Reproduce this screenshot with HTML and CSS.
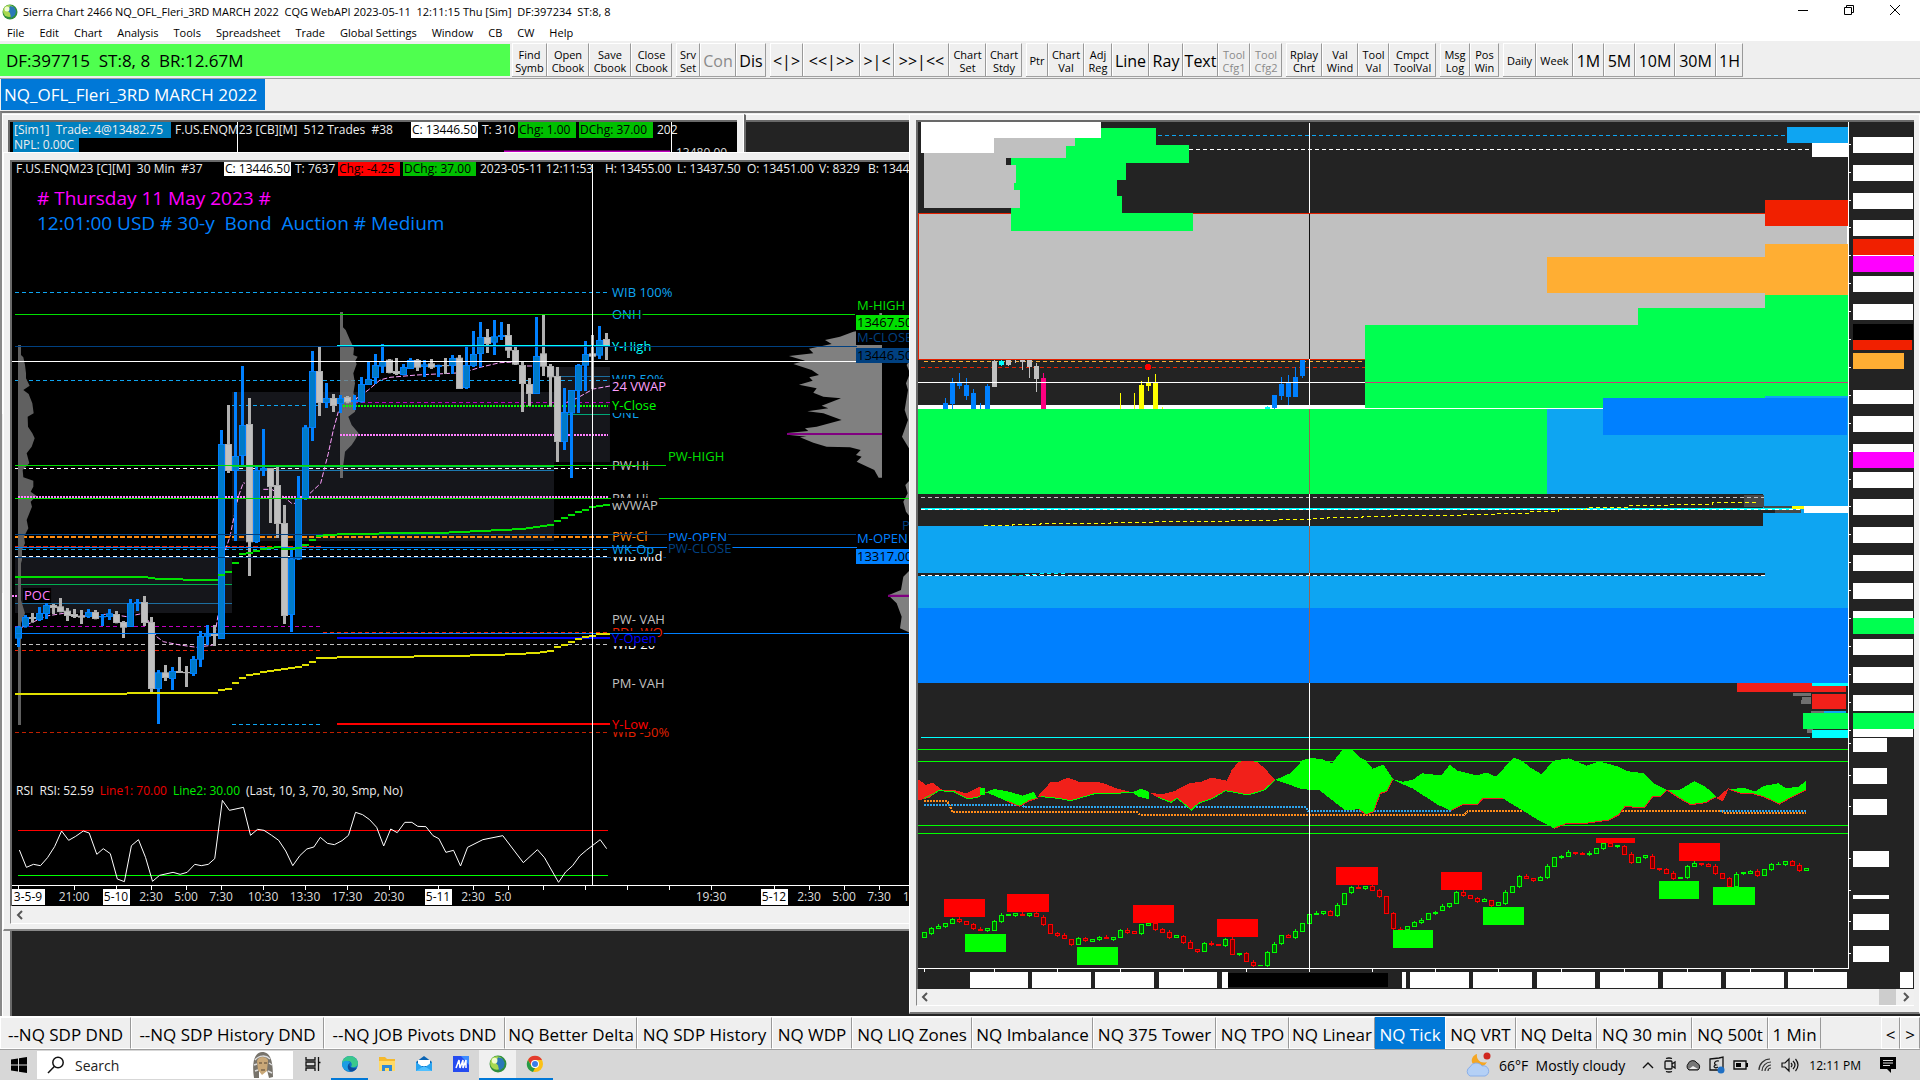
FILE: index.html
```html
<!DOCTYPE html>
<html lang="en">
<head>
<meta charset="utf-8">
<title>Sierra Chart 2466 NQ_OFL_Fleri_3RD MARCH 2022</title>
<link rel="stylesheet" href="styles.css">
</head>
<body>
<svg width="0" height="0" class="defs" aria-hidden="true">
  <defs>
    <symbol id="globe" viewBox="0 0 16 16"><circle cx="8" cy="8" r="7.5" fill="#2f8f3c"/><circle cx="7" cy="7" r="6" fill="#a8d850"/><path d="M8 2l4 1 2 4-1 4-4 3-1-5-2-2z" fill="#2a78b8"/><circle cx="5" cy="5" r="2.5" fill="#f0fbd0"/></symbol>
  </defs>
</svg>

<header class="titlebar">
  <svg class="app-icon" width="16" height="16"><use href="#globe"/></svg>
  <h1 class="title">Sierra Chart 2466 NQ_OFL_Fleri_3RD MARCH 2022&nbsp; CQG WebAPI 2023-05-11&nbsp; 12:11:15 Thu [Sim]&nbsp; DF:397234&nbsp; ST:8, 8</h1>
  <div class="caption">
    <button aria-label="Minimize"><svg width="12" height="12"><path d="M1 6.5h10" stroke="#000"/></svg></button>
    <button aria-label="Restore"><svg width="12" height="12"><path d="M1.500 3.500h7v7h-7zM3.500 3.500v-2h7v7h-2" fill="none" stroke="#000"/></svg></button>
    <button aria-label="Close"><svg width="12" height="12"><path d="M1 1l10 10M11 1L1 11" stroke="#000"/></svg></button>
  </div>
</header>
<nav class="menu">
  <button>File</button><button>Edit</button><button>Chart</button><button>Analysis</button><button>Tools</button><button>Spreadsheet</button><button>Trade</button><button>Global Settings</button><button>Window</button><button>CB</button><button>CW</button><button>Help</button>
</nav>

<div class="toolbar">
  <div class="status">DF:397715&nbsp; ST:8, 8&nbsp; BR:12.67M</div>
  <div class="group g-book"><button>Find<br>Symb</button><button>Open<br>Cbook</button><button>Save<br>Cbook</button><button>Close<br>Cbook</button></div>
  <div class="group g-conn"><button>Srv<br>Set</button><button class="big" disabled>Con</button><button class="big">Dis</button></div>
  <div class="group g-space"><button class="big">&lt;|&gt;</button><button class="big">&lt;&lt;|&gt;&gt;</button><button class="big">&gt;|&lt;</button><button class="big">&gt;&gt;|&lt;&lt;</button><button>Chart<br>Set</button><button>Chart<br>Stdy</button></div>
  <div class="group g-draw"><button>Ptr</button><button>Chart<br>Val</button><button>Adj<br>Reg</button><button class="big">Line</button><button class="big">Ray</button><button class="big">Text</button><button disabled>Tool<br>Cfg1</button><button disabled>Tool<br>Cfg2</button></div>
  <div class="group g-val"><button>Rplay<br>Chrt</button><button>Val<br>Wind</button><button>Tool<br>Val</button><button>Cmpct<br>ToolVal</button></div>
  <div class="group g-log"><button>Msg<br>Log</button><button>Pos<br>Win</button></div>
  <div class="group g-time"><button>Daily</button><button>Week</button><button class="big">1M</button><button class="big">5M</button><button class="big">10M</button><button class="big">30M</button><button class="big">1H</button></div>
</div>
<div class="booktabs"><button>NQ_OFL_Fleri_3RD MARCH 2022</button></div>

<main class="desktop">
  <section class="window w-back"><div class="pane back-pane"></div></section>

  <section class="window w-ticks">
    <div class="pane black">
      <svg class="ticks-chart" width="1100" height="170" viewBox="10 122 1100 170">
        <path d="M237.500 122v40M671.500 122v40" stroke="#fff"/>
        <path d="M504 151.500h166" stroke="#c000c0" stroke-width="2"/>
        <text x="676" y="157" class="ct" fill="#ddd">13480.00</text>
      </svg>
      <div class="legend ticks-legend">
        <span class="sim">[Sim1]&nbsp; Trade: 4@13482.75</span><span>F.US.ENQM23 [CB][M]&nbsp; 512 Trades&nbsp; #38</span><span class="last">C: 13446.50</span><span>T: 310</span><span class="up">Chg: 1.00</span><span class="up">DChg: 37.00</span><span class="cut">202</span>
        <span class="sim npl">NPL: 0.00C</span>
      </div>
    </div>
  </section>

  <section class="window w-empty"><div class="pane back-pane"></div></section>

  <section class="window w-main">
    <div class="pane black">
      <svg id="main-chart" width="1100" height="743" viewBox="12 162 1100 743">
        <g transform="translate(0 240) scale(.33333)" id="m"></g>
        <g fill="none" stroke="#fff">
          <path d="M18 830.500h590" stroke="#f00" stroke-width="1"/><path d="M18 875.500h590" stroke="#0f0"/>
          <path transform="translate(0 720) scale(.5867 .33333)" vector-effect="non-scaling-stroke" d="M33 390 45 442 57 433 69 437 81 413 93 380 105 333 117 361 129 349 142 333 152 339 165 403 176 386 188 401 200 477 212 485 224 377 236 359 248 412 260 484 272 466 295 457 307 463 319 457 332 433 343 437 355 433 366 416 379 241 391 271 415 262 427 346 439 328 450 331 463 346 475 361 487 393 499 437 511 407 523 387 535 381 546 352 558 370 570 374 583 362 594 346 606 277 618 284 630 299 642 322 654 378 666 327 677 338 690 307 702 307 712 319 726 320 738 347 748 356 760 397 773 391 785 438 797 382 823 359 857 347 892 428 916 389 928 413 952 487 964 456 976 437 988 408 1000 390 1023 359 1034 386"/>
          <path d="M12 885.500h1100M18.500 885v5M74.500 885v5M116.500 885v5M151.500 885v5M186.500 885v5M221.500 885v5M263.500 885v5M305.500 885v5M347.500 885v5M389.500 885v5M438.500 885v5M473.500 885v5M508.500 885v5M543.500 885v5M585.500 885v5M627.500 885v5M669.500 885v5M711.500 885v5M774.500 885v5M809.500 885v5M844.500 885v5M879.500 885v5"/>
          <path d="M592.500 164v721" />
        </g>
        <g id="main-axis" class="ct" text-anchor="middle"></g>
      </svg>
      <div class="legend main-legend">
        <span>F.US.ENQM23 [C][M]&nbsp; 30 Min&nbsp; #37</span><span class="last">C: 13446.50</span><span>T: 7637</span><span class="down">Chg: -4.25</span><span class="up">DChg: 37.00</span><span>2023-05-11 12:11:53</span><span>H: 13455.00</span><span>L: 13437.50</span><span>O: 13451.00</span><span>V: 8329</span><span>B: 13445.75</span>
      </div>
      <div class="news"><p class="day"># Thursday 11 May 2023 #</p><p>12:01:00 USD # 30-y&nbsp; Bond&nbsp; Auction # Medium</p></div>
      <p class="rsi"><span>RSI&nbsp; RSI: 52.59</span><span class="r">Line1: 70.00</span><span class="g">Line2: 30.00</span><span>(Last, 10, 3, 70, 30, Smp, No)</span></p>
    </div>
    <div class="scroll"><button aria-label="Scroll left"><svg width="8" height="10"><path d="M6 1L2 5l4 4" fill="none" stroke="#555" stroke-width="2"/></svg></button></div>
  </section>

  <section class="window w-tick">
    <div class="pane dark">
      <svg id="tick-chart" viewBox="918 122 996 867" preserveAspectRatio="none" shape-rendering="crispEdges">
        <!-- overhead zone -->
        <g fill="none" stroke-dasharray="4 3"><path d="M1158 135.500h628" stroke="#0ea5f2"/><path d="M1189 149.500h622" stroke="#fff"/></g>
        <path d="M918.500 213.500H1848V359.500H918.500z" fill="#c0c0c0" stroke="#e32000"/>
        <path fill="#00ff50" d="M1101 128h55v17h33v18h-63v17h-9v16h5v17h71v18h-182v-73h55v-12h9v-8h26z"/>
        <path fill="#c0c0c0" d="M994 138h81v8h-9v12h-60v7h10v18h-2v7h6v18h-96v-55h70z"/>
        <path fill="#fff" d="M921 122h180v16H994v15h-73z"/>
        <path fill="#0ea5f2" d="M1787 127h61v16h-61z"/><path fill="#fff" d="M1812 143h36v14h-36zM1847 226h1v18h-1z"/>
        <path fill="#f12000" d="M1765 200h83v26h-83z"/>
        <path fill="#ffae33" d="M1547 257h218v-13h83v51h-83v-2h-218z"/>
        <!-- price band -->
        <g fill="none" stroke-dasharray="4 3"><path d="M924 361.500h440" stroke="#ffae33"/><path d="M921 367.500h444" stroke="#e32000"/></g>
        <path fill="#fff" d="M918 405h447v4H918z"/>
        <g id="band"></g>
        <circle cx="1148" cy="367" r="3" fill="#f00"/>
        <path d="M918 382.500h447" stroke="#fff"/>
        <path fill="#00ff50" d="M1365 325h273v-17h127v-13h83v114h-483zM918 409h629v85H918z"/>
        <path d="M1365 408.500h240" stroke="#fff"/><path d="M1365 382.500h483" stroke="#c83c78"/>
        <path fill="#0ea5f2" d="M1547 409h218v-13h83v130H918h845v-32h-216z"/>
        <path fill="#0080ff" d="M1603 398h244v37h-244z"/>
        <path fill="#0ea5f2" d="M918 526h930v82H918z"/><path fill="#0080ff" d="M918 608h930v75H918z"/>
        <path fill="#484848" d="M1744 495h20v12h-20zM1764 506h28v3h-28zM1775 510h26v3h-26z"/>
        <path fill="#232323" d="M1763 509h12v4h-12z"/>
        <path d="M921 497.500h843" stroke="#c0c0c0" stroke-dasharray="4 3"/>
        <path d="M921 509h871" stroke="#0ff" stroke-width="2"/><path d="M921 509.500h880" stroke="#fff" stroke-dasharray="4 3"/>
        <path d="M984 525.500h28v-1h28v-1h70v-1h42v-1h77v-1h49v-1h35v-1h14v-1h35v-1h28v-1h70v-1h35v-1h35v-2h28v-2h28v-2h42v-2h42v-1h42v-2h46" fill="none" stroke="#ff0" stroke-dasharray="4 3"/>
        <path fill="#ff0" d="M1792 506h12v3h-12z"/><path fill="#fff" d="M1804 506h44v7h-44z"/>
        <path fill="#232323" d="M918 573h847v3H918z"/><path d="M921 575.500h844" stroke="#fff" stroke-dasharray="4 3"/>
        <path d="M1012 575.500h13M1025 574.500h15M1040 573.500h28" stroke="#0ff" stroke-dasharray="4 3"/>
        <!-- lower tags -->
        <path fill="#f1201a" d="M1737 683h109v9h-109zM1812 694h34v15h-34z"/>
        <path fill="#707070" d="M1793 693h18v3h-18zM1802 697h9v3h-9zM1801 700h10v4h-10zM1811 711h13v3h-13zM1807 729h6v4h-6z"/>
        <path fill="#0ea5f2" d="M1824 711h22v2h-22z"/><path fill="#00ff50" d="M1803 713h45v16h-45z"/>
        <path fill="#0ff" d="M1812 683h36v3h-36zM1812 730h36v8h-36zM921 737h889v1H921z"/>
        <path d="M918 749.500h930M918 761.500h930M918 825.500h930M918 833.500h930" stroke="#0f0"/>
        <!-- oscillator and swing candles, drawn in sub-pixel units -->
        <g transform="translate(910 730) scale(.6441 .33333)" stroke-width="1">
          <g fill="none" stroke-width="2" stroke-dasharray="2 1">
            <path vector-effect="non-scaling-stroke" stroke="#ff8c1a" d="M22 213H58L66 246H352L358 255H860L866 243H952M1106 243H1260L1264 248H1391"/>
            <path vector-effect="non-scaling-stroke" stroke="#2ba4ee" d="M22 225H175L177 231H614L618 243H840M1258 243H1391"/>
          </g>
          <path fill="#f1201a" d="M12 147 25 165 35 158 50 180 68 180 88 190 108 170 118 187 108 200 90 207 68 185 45 182 30 203 12 212zM198 200 218 157 230 155 245 143 265 157 280 155 298 158 320 175 345 187 320 190 285 192 250 212 230 205zM370 187 390 193 410 184 435 158 450 157 468 143 492 152 500 118 510 96 522 92 540 96 553 120 567 150 550 180 525 195 490 182 470 205 448 220 437 240 415 205 405 217 385 202zM1252 205 1272 172 1262 215z"/>
          <path fill="#0f0" d="M118 187 130 177 150 183 175 197 192 186 198 205 185 212 170 229 150 213zM108 174h8v22h-8zM345 187 358 177 370 183 372 208 355 200zM567 150 590 130 610 90 625 84 640 88 655 100 672 58 686 58 697 80 708 92 718 116 735 104 750 148 740 185 730 190 720 245 708 254 697 238 675 240 655 210 635 180 610 178 590 165zM750 148 765 155 780 150 795 130 825 136 838 104 850 122 880 136 895 128 910 140 925 108 937 83 950 92 965 115 980 132 1000 92 1023 85 1050 107 1070 94 1100 110 1115 124 1140 130 1155 160 1175 180 1165 200 1153 200 1140 233 1110 230 1100 255 1085 270 1045 281 1020 280 1000 295 975 270 950 240 920 205 890 205 880 225 860 222 840 242 820 225 800 200 780 175 765 163zM1175 180 1195 180 1218 153 1235 170 1252 200 1235 218 1212 224 1195 205zM1272 178 1295 173 1312 185 1325 168 1348 160 1360 175 1380 170 1391 152 1391 180 1370 200 1350 222 1325 200 1310 192 1290 190z"/>
          <g fill="none"><path vector-effect="non-scaling-stroke" stroke="#0f0" d="M22 206 45 182 68 185 90 207 108 200M204 200 230 205 250 212 285 192 320 190 345 187M385 202 405 217 415 205 437 240 448 220 470 205 490 182 525 195 550 180 567 150"/>
          <path vector-effect="non-scaling-stroke" stroke="#f1201a" d="M150 213 170 229 185 212 198 205M697 238 708 254 720 245 730 190 740 185 750 148M840 242 860 222 880 225 890 205 920 205M1000 295 1020 280 1045 281 1085 270 1100 255 1110 230 1140 233 1153 200 1165 200 1175 180 1195 205 1212 224 1235 218 1252 200M1272 178 1290 190 1310 192 1325 200 1350 222 1370 200 1391 180"/></g>
          <g id="swing"></g>
          <path fill="#f00" d="M53 507h63v54h-63zM151 492h65v54h-65zM346 525h64v54h-64zM477 567h63v54h-63zM661 411h66v54h-66zM824 426h64v54h-64zM1065 324h61v15h-61zM1194 339h64v54h-64z"/>
          <path fill="#0f0" d="M85 612h64v54H85zM259 651h64v54h-64zM750 600h62v54h-62zM890 531h63v54h-63zM1163 453h62v54h-62zM1247 471h65v54h-65z"/>
        </g>
        <!-- crosshair, inverted over the filled zones -->
        <g fill="none"><path stroke="#fff" d="M1309.500 123v90M1309.500 359v50M1309.500 494v32M1309.500 573v3M1309.500 683v285"/><path stroke="#111" d="M1309.500 214v145"/><path stroke="#966450" d="M1309.500 409v85M1309.500 526v47M1309.500 576v107"/></g>
        <!-- scales -->
        <path d="M1848.500 122v847M918 968.500h931" stroke="#fff"/>
        <g id="scale"></g>
      </svg>
    </div>
    <div class="scroll both"><button aria-label="Scroll left"><svg width="8" height="10"><path d="M6 1L2 5l4 4" fill="none" stroke="#555" stroke-width="2"/></svg></button><span class="thumb"></span><button aria-label="Scroll right"><svg width="8" height="10"><path d="M2 1l4 4-4 4" fill="none" stroke="#555" stroke-width="2"/></svg></button></div>
  </section>
</main>

<nav class="charttabs">
  <button>--NQ SDP DND</button><button>--NQ SDP History DND</button><button>--NQ JOB Pivots DND</button><button>NQ Better Delta</button><button>NQ SDP History</button><button>NQ WDP</button><button>NQ LIQ Zones</button><button>NQ Imbalance</button><button>NQ 375 Tower</button><button>NQ TPO</button><button>NQ Linear</button><button class="on">NQ Tick</button><button>NQ VRT</button><button>NQ Delta</button><button>NQ 30 min</button><button>NQ 500t</button><button>1 Min</button><span></span><button>&lt;</button><button>&gt;</button>
</nav>

<footer class="taskbar">
  <button class="start" aria-label="Start"><svg width="16" height="16"><path d="M0 2.500l7-1v6H0zM8 1.300l8-1.300v7.500H8zM0 8.500h7v6l-7-1zM8 8.500h8V16l-8-1.300z"/></svg></button>
  <label class="search">
    <svg width="18" height="18" fill="none" stroke="#111" stroke-width="1.500"><circle cx="11" cy="6.500" r="5.200"/><path d="M7.300 10.500L1 17"/></svg>
    <input type="text" placeholder="Search" aria-label="Search">
    <svg width="24" height="28"><path d="M3 27C1 14 2 2 11 1c9 0 11 10 11 25l-4 1-2-8-8 1v7z" fill="#77736b"/><path d="M6 10c1-5 9-5 11-1l-1 11-5 4-4-5z" fill="#c9a878"/><path d="M4 9c4-5 11-5 15-1M3 14l3-1M18 12l3 2M4 20l3-1M17 20l4 2" stroke="#ddd" stroke-width="1.500" fill="none"/><path d="M8 12h3M13 12h3M10 19h4" stroke="#543"/></svg>
  </label>
  <div class="apps">
    <button aria-label="Task view"><svg width="16" height="16" fill="none" stroke="#111" stroke-width="1.300"><path d="M1 1v3h9V1M1 15v-3h9v3M1 6h9v4H1zM13.500 1v14M13.500 6.500h2"/></svg></button>
    <button class="run" aria-label="Edge"><svg width="18" height="18"><circle cx="9" cy="9" r="8" fill="#0c74c8"/><path d="M1 9C1 4 5 1 9 1c5 0 8 4 8 7 0 4-4 5-7 4 2-3 0-6-3-6-3 0-5 1-6 3z" fill="#3ac88c"/><path d="M1 9c1-4 7-4 8-1-3 1-3 6 1 8-5 1-9-3-9-7z" fill="#1b9de2"/><path d="M9 8c-2 3 1 6 7 5-2 3-5 4-7 3-3-2-3-6 0-8z" fill="#0c4a9a"/></svg></button>
    <button aria-label="File Explorer"><svg width="18" height="18"><path d="M1 2h6l2 2h8v12H1z" fill="#f5b92c"/><path d="M1 6h16v10H1z" fill="#ffd966"/><path d="M4 16v-6h10v6h-3v-3H7v3z" fill="#2e8ad8"/></svg></button>
    <button aria-label="Mail"><svg width="18" height="18"><path d="M1 7l8-6 8 6v9H1z" fill="#0a64b4"/><path d="M3 5h12v6H3z" fill="#fff"/><path d="M1 7l8 6 8-6v9H1z" fill="#2aa4f0"/><path d="M1 16l8-5 8 5z" fill="#50c0ff"/></svg></button>
    <button aria-label="MSI app"><svg width="18" height="18"><path d="M1 1h16v16H1z" fill="#254bf0"/><path d="M9 1h8v9z" fill="#3d8cff"/><path d="M4 13l3-8 1 8 3-8v8l3-8v8" stroke="#fff" stroke-width="1.500" fill="none"/></svg></button>
    <button class="run active" aria-label="Sierra Chart"><svg width="18" height="18"><use href="#globe"/></svg></button>
    <button class="run" aria-label="Chrome"><svg width="18" height="18"><circle cx="9" cy="9" r="8" fill="#fbc116"/><path d="M2 5a8 8 0 0 1 14 0H9L6 11z" fill="#e33b2e"/><path d="M2 5l4 7 3 1-2 4A8 8 0 0 1 2 5z" fill="#269b48"/><circle cx="9" cy="9" r="4" fill="#fff"/><circle cx="9" cy="9" r="3" fill="#3b7de8"/></svg></button>
  </div>
  <div class="tray">
    <svg width="26" height="26"><path d="M12 2c-1 6 4 10 10 8-3 6-11 7-14 2-3-4 0-9 4-10z" fill="#f5a623"/><path d="M5 24a5 5 0 0 1 0-9 7 7 0 0 1 12-1 5 5 0 0 1 3 10z" fill="#b4d0f6" stroke="#8ab0ea"/><circle cx="22" cy="4" r="3.500" fill="#d0261e"/></svg>
    <span class="weather">66°F&nbsp; Mostly cloudy</span>
    <svg width="14" height="16"><path d="M2 11l5-5 5 5" fill="none" stroke="#111" stroke-width="1.400"/></svg>
    <svg width="14" height="16" fill="none" stroke="#111" stroke-width="1.300"><rect x="2" y="4" width="7" height="8" rx="1"/><path d="M9 7l3-2v6l-3-2M3 1.500q3-1 6 0M3 14.500q3 1 6 0"/></svg>
    <svg width="16" height="16"><path d="M4 13a4 4 0 0 1-1-6 5 5 0 0 1 9-1 4 4 0 0 1 1 7z" fill="#777" stroke="#111"/><path d="M4 12l4-3 5 3z" fill="#eee"/></svg>
    <svg width="16" height="18"><path d="M1 3l9-1 4-1v13H1z" fill="none" stroke="#111" stroke-width="1.300"/><path d="M10 5c-4-1-6 3-3 4-4 1-1 4 2 2" fill="none" stroke="#111" stroke-width="1.200"/><circle cx="12" cy="14" r="3.500" fill="#1e6fc4"/></svg>
    <svg width="16" height="16"><path d="M1 4h12v8H1z" fill="none" stroke="#111" stroke-width="1.400"/><path d="M3 6h5v4H3zM13 6h2v4h-2z"/></svg>
    <svg width="16" height="16" fill="none" stroke="#333" stroke-width="1.200"><path d="M2 13C2 7 7 2 13 2M5 14c0-5 4-9 9-9M8 14c0-3 3-6 6-6M11 14c0-2 1-3 3-3"/></svg>
    <svg width="18" height="16" fill="none" stroke="#111" stroke-width="1.200"><path d="M1 6h3l4-4v12l-4-4H1zM10 6q2 2 0 4M12 4q4 4 0 8M14.500 2q5 6 0 12"/></svg>
    <time>12:11 PM</time>
    <button aria-label="Notifications"><svg width="18" height="18"><path d="M1 1h16v12h-5v4l-4-4H1z"/><path d="M4 4.500h10M4 7h10M4 9.500h7" stroke="#ddd"/></svg></button>
  </div>
</footer>
<script src="charts.js"></script>
</body>
</html>
```
FILE: styles.css
```css
* { box-sizing: border-box; }
body { margin: 0; min-height: 100vh; height: 100vh; display: flex; flex-direction: column; overflow: hidden; background: #efefef; color: #000; font-family: "Open Sans", "Noto Sans", sans-serif; font-size: 11px; }
button { font: inherit; color: inherit; background: none; border: 0; padding: 0; white-space: nowrap; }
h1, p { margin: 0; }
svg { display: block; flex: none; }
.defs { position: absolute; }

.titlebar { display: flex; align-items: center; height: 23px; padding-left: 2px; background: #fff; flex: none; }
.title { font-size: 11px; font-weight: 400; margin-left: 5px; flex: 1; white-space: pre; }
.caption { display: flex; gap: 34px; padding: 0 19px 4px 0; }
.menu { display: flex; gap: 15px; padding: 0 7px; height: 18px; background: #fff; flex: none; line-height: 20px; }

.toolbar { display: flex; gap: 4px; height: 38px; padding: 2px 0 1px; flex: none; border-bottom: 1px solid #a0a0a0; }
.status { width: 510px; margin-right: -2px; padding-left: 6px; height: 32px; margin-top: 1px; background: #4fff4f; font-size: 17px; line-height: 33px; }
.group { display: grid; border-bottom: 1px solid #a0a0a0; }
.group button { border: 1px solid #fff; border-right-color: #999; border-bottom: 0; line-height: 13px; padding-top: 1px; overflow: hidden; }
.group .big { font-size: 16px; line-height: 20px; }
.group button:disabled { color: #8a8a8a; }
.g-book { grid-template-columns: 35px 42px 42px 41px; }
.g-conn { grid-template-columns: 24px 36px 30px; }
.g-space { grid-template-columns: 33px 57px 34px 55px 37px 36px; }
.g-draw { grid-template-columns: 22px 36px 28px 37px 34px 35px 32px 32px; }
.g-val { grid-template-columns: 36px 36px 31px 47px; }
.g-log { grid-template-columns: 30px 29px; }
.g-time { grid-template-columns: 33px 37px 31px 31px 40px 41px 27px; }

.booktabs { height: 32px; flex: none; padding-left: 1px; }
.booktabs button { height: 31px; padding: 0 3px; background: #0078d7; color: #fff; font-size: 17px; line-height: 31px; width: 264px; text-align: left; }

.desktop { flex: 1; position: relative; overflow: hidden; border-top: 2px solid #777; border-left: 2px solid #888; background: #efefef; }
.window { position: absolute; display: flex; flex-direction: column; background: #efefef; border: 1px solid #fff; padding: 5px 5px 5px 6px; }
.pane { position: relative; overflow: hidden; border: 2px solid #696969; border-right: 0; border-bottom: 0; flex: 1; }
.black { background: #000; }
.dark { background: #232323; }
.back-pane { background: #232323; }
.w-back { left: 0; top: 480px; right: -10px; bottom: -40px; padding-left: 7px; }
.w-ticks { left: 0; top: 1px; width: 742px; height: 300px; padding-right: 6px; padding-left: 5px; }
.w-empty { left: 742px; top: 1px; width: 700px; height: 300px; padding-left: 0; border-left: 2px solid #696969; }
.w-empty .pane { border-left: 0; }
.w-main { left: 1px; top: 39px; width: 1116px; height: 779px; border-bottom: 2px solid #888; padding-top: 7px; }
.w-tick { left: 907px; top: 1px; right: 0; bottom: 2px; border-bottom: 2px solid #777; padding-bottom: 6px; }
.scroll { height: 18px; display: flex; align-items: center; padding: 0 5px; background: #f0f0f0; border-left: 1px solid #888; border-bottom: 1px solid #fff; flex: none; }
.both { height: 17px; padding: 0 4px; }
.thumb { margin-left: auto; width: 17px; height: 16px; margin-right: 6px; background: #cdcdcd; }
#tick-chart { width: 100%; height: 100%; }

.ct { font-size: 12px; font-family: "Open Sans", "Noto Sans", sans-serif; }
.tag { font-size: 13px; }
.legend { position: absolute; top: 0; display: grid; color: #eee; font-size: 12px; line-height: 16px; white-space: nowrap; }
.legend span { padding: 0 1px; }
.ticks-legend { left: 3px; column-gap: 3px; grid-template-columns: 158px 234px 67px 34px 58px 74px 20px; }
.main-legend { left: 3px; column-gap: 3px; grid-template-columns: 206px 67px 41px 62px 73px 122px 69px 67px 69px 46px 80px; line-height: 14px; }
.legend .sim { background: #0080c0; }
.legend .npl { width: 66px; height: 14px; line-height: 14px; }
.legend .last { background: #fff; color: #000; }
.legend .up { background: #00c000; color: #000; }
.legend .down { background: #f00; color: #000; }
.news { position: absolute; left: 25px; top: 24px; font-size: 19px; line-height: 25px; color: #0080ff; }
.news .day { color: #f0f; }
.rsi { position: absolute; left: 4px; top: 621px; display: flex; gap: 6px; color: #eee; font-size: 12px; line-height: 16px; }
.rsi .r { color: #e00; }
.rsi .g { color: #0e0; }

.charttabs { flex: none; height: 34px; display: grid; grid-template-columns: 131px 193px 181px 132px 135px 80px 120px 121px 123px 73px 86px 70px 71px 81px 95px 76px 53px 1fr 19px 20px; border-top: 1px solid #fff; border-bottom: 1px solid #a0a0a0; }
.charttabs button { border: 1px solid #fff; border-right-color: #999; font-size: 17px; padding-top: 2px; }
.charttabs .on { background: #0078d7; color: #fff; border-color: #0078d7; }

.taskbar { flex: none; height: 30px; display: flex; background: #d7d7d7; }
.start { width: 37px; display: grid; place-items: center; }
.search { width: 256px; margin: 1px 0; background: #fff; display: flex; align-items: center; padding: 0 18px 0 10px; gap: 10px; }
.search input { flex: 1; min-width: 0; border: 0; padding: 0; font: 14px "Open Sans", sans-serif; outline: 0; }
.search input::placeholder { color: #222; opacity: 1; }
.apps { display: flex; margin-left: 1px; }
.apps button { width: 37px; display: grid; place-items: center; border-bottom: 2px solid transparent; }
.apps .run { border-bottom-color: #0078d7; }
.apps .active { background: #f0f0f0; }
.tray { margin-left: auto; display: flex; align-items: center; gap: 8px; padding-right: 23px; font-size: 14px; }
.weather { margin-right: 8px; }
.tray time { font-size: 12px; margin: 0 10px 0 2px; }
```
FILE: charts.js
```js
const NS = 'http://www.w3.org/2000/svg';
function add(parent, tag, attrs, text) {
  const el = document.createElementNS(NS, tag);
  for (const k in attrs) el.setAttribute(k, attrs[k]);
  if (text) el.textContent = text;
  parent.appendChild(el);
  return el;
}
const byId = id => document.getElementById(id);

/* ---- 30 minute chart: coordinates are thirds of a pixel ---- */
const m = byId('m');
const line = (x1, x2, y, c, w = 3, dash) => add(m, 'path', { d: `M${x1} ${y}H${x2}`, stroke: c, 'stroke-width': w, fill: 'none', 'shape-rendering': 'crispEdges', ...(dash && { 'stroke-dasharray': dash }) });
const box = (x, y, x2, y2, c) => add(m, 'rect', { x, y, width: x2 - x, height: y2 - y, fill: c });
box(45, 950, 696, 1119, '#15161b');
box(696, 456, 1662, 903, '#15161b');
box(1662, 381, 1830, 666, '#15161b');

const D = '12 9', S = '6 3';
line(45, 1830, 157, '#0ea5f2', 3, D);
line(45, 1830, 421, '#0ea5f2', 3, D);
line(696, 969, 496, '#0ea5f2', 3, D);
line(1020, 1830, 487, '#c000c0', 3, D);
line(45, 1830, 685, '#fff', 3, D);
line(696, 1662, 691, '#1c78b0');
line(45, 696, 1033, '#00b050');
line(45, 696, 1090, '#1c6ea0');
line(1662, 1830, 409, '#1c6ea0');
line(1704, 1830, 523, '#00a878');
line(45, 1830, 890, '#ff8c10', 6, '15 6');
line(45, 969, 919, '#f02000', 4, '15 6');
line(45, 1830, 928, '#0ea5f2', 3, D);
line(45, 1830, 949, '#fff', 3, D);
line(45, 969, 1159, '#c000c0', 3, D);
line(969, 1830, 1177, '#f02000', 3, D);
line(45, 1830, 1213, '#c0c0c0', 3, D);
line(45, 969, 1231, '#f02000', 3, D);
line(696, 969, 1453, '#0ea5f2', 3, D);
line(45, 1830, 1477, '#c02000', 3, D);
line(1011, 1830, 1451, '#f00', 6);
line(1011, 1830, 1194, '#00f', 6);

const shape = (d, c, o = 1) => add(m, 'path', { d, fill: c, opacity: o });
shape('M54 315H63V345L70 352 75 375 78 400 78 415 89 437 70 450 86 462 97 490 101 520 83 530 84 560 97 580 104 595 95 620 80 640 88 670 68 690 70 712 100 722 100 740 92 755 110 768 92 785 96 800 80 840 85 865 72 890 75 910 66 930 66 960 63 970 63 1080 75 1120 63 1150V1455H54z', '#606060');
shape('M1020 216H1029V262L1037 270 1050 300 1062 325 1060 345 1073 350 1066 362 1070 372 1060 400 1065 430 1060 460 1072 475 1065 515 1045 530 1055 555 1076 580 1065 600 1055 615 1035 635 1032 660 1029 680V714H1020z', '#808080', .8);
const right = add(m, 'g', { transform: 'translate(1320 0)', fill: '#808080' });
add(right, 'path', { d: 'M1318 219H1326V713H1316L1303 690 1282 680 1250 665 1265 650 1248 645 1262 630 1230 622 1160 620 1120 608 1080 592 1100 590 1042 584 1042 579 1105 573 1095 565 1130 560 1205 540 1150 520 1102 514 1165 505 1145 497 1203 475 1150 470 1120 458 1130 445 1077 434 1118 422 1108 412 1137 405 1115 390 1060 372 1095 362 1047 348 1120 340 1107 326 1175 312 1155 300 1200 290 1240 275 1318 262zM1410 360 1400 375 1410 400 1398 430 1404 450 1394 510 1404 540 1386 590 1410 630V720L1396 735 1403 760 1390 785 1398 815 1410 830M1410 990 1390 1010 1383 1050 1345 1066 1370 1090 1385 1130 1380 1165 1410 1178z' });
add(right, 'path', { d: 'M1041 579h285v6h-285zM1344 1064h70v7h-70z', fill: '#800080' });
line(54, 1824, 771, '#ff80ff', 6, S);
line(1020, 1824, 584, '#ff80ff', 6, S);
line(1020, 1824, 498, '#0f0', 6, S);
line(36, 54, 1068, '#ff80ff', 6, S);

/* type, body top, body bottom, high, low */
const bars = `B1160,1196,1158,1221 B1131,1160,1125,1163 S1131,1137,1119,1148 B1119,1140,1101,1143 B1095,1122,1065,1137 S1095,1104,1092,1122 S1099,1116,1074,1117 S1112,1128,1104,1143 S1122,1131,1107,1134 S1127,1133,1110,1152 B1116,1131,1107,1134 S1116,1137,1110,1138 B1128,1132,1122,1158 B1120,1131,1107,1140 S1122,1149,1113,1150 S1146,1163,1143,1194 B1089,1161,1077,1161 B1086,1090,1077,1113 S1086,1149,1068,1158 S1146,1347,1131,1356 B1297,1347,1290,1452 S1297,1314,1275,1323 B1293,1317,1281,1350 S1293,1299,1251,1299 S1296,1299,1278,1341 B1257,1302,1248,1308 B1188,1259,1173,1281 B1181,1190,1155,1215 S1181,1188,1155,1218 B612,1197,570,1197 S612,693,495,699 B648,693,456,903 B555,648,378,676 S552,907,474,1008 B690,906,678,909 B684,692,567,708 S684,741,684,849 S735,852,678,894 S849,1128,795,1152 B955,1125,925,1176 B776,958,708,960 B562,776,555,780 B393,564,333,603 S393,489,321,528 B474,489,429,504 S474,498,462,516 B474,492,465,519 S471,487,468,490 B480,486,465,510 B432,486,411,488 B417,435,366,435 B375,414,342,432 B363,380,312,399 S359,399,357,400 S393,402,354,405 B381,405,372,406 B360,387,354,387 S360,383,357,393 B373,381,360,411 S370,383,357,387 B375,381,374,411 S375,378,354,402 B354,378,345,402 S353,447,345,447 B375,444,321,447 B342,378,273,381 B291,342,246,381 S291,312,267,339 B289,308,240,345 B285,291,246,300 S285,332,252,354 S330,374,321,375 S375,432,366,516 S432,462,414,498 B348,462,231,462 S340,380,225,408 S378,412,372,500 S408,606,381,666 B516,606,444,630 B450,520,450,714 B375,453,372,519 B342,377,303,453 S340,350,285,447 B300,347,258,357 S297,318,279,360`.split(' ');
add(m, 'path', { d: 'M60 1165 90 1150 140 1128 190 1120 240 1128 330 1122 380 1130 430 1120 450 1150 470 1190 490 1205 540 1215 590 1222 640 1215 655 1120M676 930 690 890 700 840 715 770 730 728 735 730M790 748 815 748 850 770 875 790 890 790M930 760 962 730 985 640 1000 570 1015 515M1063 480 1105 450 1140 420 1170 412 1250 405 1390 398 1440 382 1500 368 1540 366M1560 378H1600M1700 487 1730 475 1780 447 1830 438', fill: 'none', stroke: '#ffa0ff', 'stroke-width': 3, 'stroke-dasharray': '15 6' });
bars.forEach((b, i) => {
  const [t, bt, h, l] = b.slice(1).split(',').map(Number), x = 55.5 + i * 21, blue = b[0] === 'B';
  const c = blue ? '#0080ff' : '#b0b0b0';
  add(m, 'rect', { x: x - 4.5, y: h, width: 9, height: l - h, fill: c });
  add(m, 'rect', { x: x - 9, y: t + 1.5, width: 18, height: Math.max(0.5, bt - t - 3), fill: blue ? '#007ac8' : '#c0c0c0', stroke: c, 'stroke-width': 3 });
});

line(45, 2565, 223, '#00e000');
line(45, 2570, 319, '#004080');
line(1011, 1830, 316, '#0ff');
line(36, 2570, 364, '#fff');
line(45, 1998, 676, '#00e000');
line(696, 1662, 679, '#00d050');
line(45, 2730, 775, '#00e000');
line(45, 2570, 883, '#004080');
line(45, 2570, 922, '#0080ff');
line(45, 1998, 952, '#004080');
line(45, 2730, 1180, '#0080ff');

/* [end x, level] pairs, drawn as separate treads */
function treads(data, color) {
  let x = 45;
  for (const [end, y] of data) { line(x, end, y, color, 6); x = end; }
}
treads([[444,1011],[465,1014],[549,1017],[654,1020],[675,1005],[696,996],[717,969],[738,942],[759,939],[780,933],[801,927],[822,924],[843,921],[885,927],[906,924],[927,915],[948,900],[969,888],[1011,885],[1137,882],[1347,879],[1410,876],[1473,873],[1536,870],[1578,867],[1599,864],[1620,861],[1641,858],[1662,855],[1683,843],[1704,834],[1725,825],[1746,816],[1767,810],[1788,801],[1809,798],[1830,795]], '#00e000');
treads([[381,1362],[654,1359],[675,1350],[696,1347],[717,1329],[738,1314],[759,1305],[780,1302],[801,1296],[822,1293],[843,1290],[864,1287],[885,1284],[906,1281],[927,1275],[948,1266],[1011,1254],[1242,1251],[1410,1248],[1515,1245],[1578,1242],[1620,1239],[1641,1236],[1662,1233],[1683,1221],[1704,1215],[1725,1206],[1746,1197],[1767,1191],[1788,1188],[1830,1182]], '#e0e000');

/* labels: x in pixels, y of the text centre in thirds */
const chart = byId('main-chart');
const labels = add(chart, 'g', { class: 'ct tag' });
function label(x, y, text, color, bg, w) {
  const cy = Math.round(240 + y / 3);
  const r = add(labels, 'rect', { x: x - 1, y: cy - 7, height: 15, fill: bg || '#000' });
  const t = add(labels, 'text', { x, y: cy + 5, fill: color }, text);
  r.setAttribute('width', w || t.getComputedTextLength() + 2);
}
const L = 612, B = '#0ea5f2', G = '#c0c0c0';
label(L, 155, 'WIB 100%', B);
label(L, 221, 'ONH', B);
label(L, 317, 'Y-High', '#0ff');
label(L, 417, 'WIB 50%', B);
label(L, 437, '24 VWAP', '#ffa0ff');
label(L, 519, 'ONL', B);
label(L, 495, 'Y-Close', '#0f0');
label(L, 674, 'PW-Hi', G);
label(L, 774, 'PM-Hi', G);
label(L, 795, 'wVWAP', G);
label(L, 887, 'PW-Cl', '#ff8c10');
label(L, 947, 'WIB Mid', '#fff');
label(L, 927, 'WK-Op', B);
label(L, 1136, 'PW- VAH', G);
label(L, 1176, 'RDL-WO', '#f02000');
label(L, 1213, 'WIB-20', '#fff');
label(L, 1194, 'Y-Open', '#00f');
label(L, 1328, 'PM- VAH', G);
label(L, 1476, 'WIB -50%', '#e02000');
label(L, 1452, 'Y-Low', '#f00');
label(668, 648, 'PW-HIGH', '#00e000');
label(668, 891, 'PW-OPEN', '#0080ff');
label(668, 923, 'PW-CLOSE', '#004080');
label(857, 194, 'M-HIGH', '#00e000');
label(857, 246, '13467.50', '#000', '#00e000', 60);
label(857, 290, 'M-CLOSE', '#004080');
label(857, 344, '13446.50', '#000', '#004080', 60);
label(902, 854, 'PM', '#004080');
label(857, 893, 'M-OPEN', '#0080ff');
label(857, 947, '13317.00', '#000', '#0080ff', 60);
label(24, 1064, 'POC', '#ff80ff');
/* level lines stay visible through their labels */
add(chart, 'path', { d: 'M610 314.500h30M610 465.500h56', stroke: '#00e000' });
add(chart, 'path', { d: 'M610 346.500h240M610 534.500h56', stroke: '#004080' });
add(chart, 'path', { d: 'M610 547.500h56M610 633.500h50', stroke: '#0080ff' });

const axis = byId('main-axis');
[[28,'3-5-9',1],[74,'21:00'],[116,'5-10',1],[151,'2:30'],[186,'5:00'],[221,'7:30'],[263,'10:30'],[305,'13:30'],[347,'17:30'],[389,'20:30'],[438,'5-11',1],[473,'2:30'],[503,'5:0'],[711,'19:30'],[774,'5-12',1],[809,'2:30'],[844,'5:00'],[879,'7:30'],[918,'10:30']].forEach(([x, t, day]) => {
  if (day) add(axis, 'rect', { x: x === 28 ? 12 : x - 13, y: 889, width: x === 28 ? 33 : 27, height: 16, fill: '#fff' });
  add(axis, 'text', { x, y: 901, fill: day ? '#000' : '#ddd' }, t);
});

/* ---- tick chart: candles visible between the zones ---- */
const band = byId('band');
const cc = { b: '#0080ff', g: '#c0c0c0', c: '#0ff', p: '#ff0080', y: '#ff0' };
[[945,'b',403,409,398,409],[952,'b',383,404,378,409],[959,'b',382,386,373,389],[966,'b',385,396,378,400],[973,'b',393,409,389,409],[980,'b',0,0,403,409],[987,'b',386,409,384,409],[994,'g',361,387,360,387],[1001,'c',361,365,360,366],[1008,'g',360,365,360,366],[1015,'g',0,0,360,363],[1022,'g',360,362,360,370],[1029,'g',360,367,360,378],[1036,'g',366,379,363,392],[1043,'p',378,409,373,409],[1120,'y',0,0,393,409],[1134,'y',0,0,393,409],[1141,'y',385,409,381,409],[1148,'y',382,386,377,391],[1155,'y',382,409,374,409],[1162,'y',0,0,407,409],[1267,'c',407,409,406,409],[1274,'b',395,408,395,409],[1281,'b',384,396,377,400],[1288,'b',382,397,375,405],[1295,'b',377,397,367,397],[1302,'b',360,376,360,378]].forEach(([x, k, t, b, h, l]) => {
  add(band, 'rect', { x, y: h, width: 1, height: l - h, fill: cc[k] });
  if (b) add(band, 'rect', { x: x - 2, y: t, width: 5, height: b - t, fill: cc[k] });
});

/* swing candles */
const swing = byId('swing');
`G608,624 G595,612 G588,597 G579,590 G567,581 R567,575 R573,584 R582,598 R598,604 G596,602 G573,604 G556,575 G553,558 G551,557 R552,557 G550,557 R549,562 R562,584 R582,611 R610,617 R615,628 R627,644 G624,645 R626,634 G627,636 G621,629 R621,628 G622,629 G600,623 R600,608 R605,611 G584,611 G579,587 R579,600 R597,609 R606,623 G617,624 R618,638 R636,658 R657,665 G640,665 R639,645 R642,648 G627,647 R627,675 G669,675 R669,697 R696,707 G705,708 G666,707 G642,668 G615,643 R615,625 G603,623 G579,606 G553,581 G549,556 G543,551 R543,557 G525,557 G489,525 G471,488 R471,476 G468,476 R468,483 R482,500 R498,551 R549,597 R597,600 G588,600 G576,590 G570,578 G549,571 G546,552 G528,543 G519,530 G486,521 R486,498 R495,507 R504,516 G509,515 R510,527 G518,527 G486,521 G468,489 G438,470 R438,447 R444,453 G441,452 G408,444 G381,411 G379,384 G366,381 R366,371 R369,374 G369,374 G354,371 G339,357 R339,350 G347,350 R348,375 R372,398 G381,399 G377,384 R379,416 R414,419 R417,431 R429,446 G441,446 G408,444 G399,410 R399,405 R402,410 R408,431 R429,446 R444,470 G432,471 G426,433 G424,431 R423,438 G417,438 G402,419 G402,405 G394,404 R394,407 R405,423 G414,423`.split(' ').forEach((s, i) => {
  const [t, b] = s.slice(1).split(',').map(Number), x = 22.5 + i * 10.87, g = s[0] === 'G', c = g ? '#0f0' : '#f00';
  add(swing, 'rect', { x: x - .8, y: t - (i % 3) * 3, width: 1.6, height: b - t + (i % 3) * 3 + (i % 2) * 3, fill: c });
  add(swing, 'rect', { x: x - 3, y: t + 1, width: 6, height: Math.max(1, b - t - 2), fill: g ? '#006000' : '#700000', stroke: c, 'vector-effect': 'non-scaling-stroke' });
});

/* price and time scales */
const scale = byId('scale');
const tag = (x, x2, y, y2, c = '#fff') => add(scale, 'rect', { x, y, width: x2 - x, height: y2 - y, fill: c });
[[137,153],[165,181],[193,209],[220,236],[255,256],[276,292],[304,320],[390,404],[416,432],[444,452],[472,488],[499,515],[527,543],[555,571],[583,599],[611,618],[639,655],[667,683],[695,711],[729,737]].forEach(([a, b]) => tag(1853, 1913, a, b));
[[738,752],[768,784],[799,815],[851,867],[895,899],[914,930],[946,962]].forEach(([a, b]) => tag(1853, a > 850 ? 1889 : 1887, a, b));
tag(1853, 1914, 239, 255, '#f12000'); tag(1853, 1914, 256, 272, '#f0f'); tag(1853, 1913, 324, 340, '#000');
tag(1853, 1912, 340, 350, '#f12000'); tag(1853, 1904, 353, 369, '#ffae33'); tag(1853, 1914, 452, 468, '#f0f');
tag(1853, 1914, 618, 634, '#00ff50'); tag(1853, 1914, 713, 729, '#00ff50');
[144,172,200,227,255,283,311,339,367,395,423,451,479,506,534,562,590,618,646,674,702,730,743,775,806,858,890,921,953].forEach(y => tag(1849, 1851, y, y + 1));
[[970,1028],[1032,1091],[1095,1154],[1159,1217],[1222,1228],[1402,1406],[1410,1469],[1473,1532],[1537,1595],[1600,1658],[1663,1721],[1726,1784],[1788,1847],[1900,1913]].forEach(([a, b]) => tag(a, b, 972, 988));
tag(1228, 1388, 973, 987, '#000');
[924,994,1057,1120,1183,1246,1309,1372,1435,1498,1561,1624,1687,1750,1813].forEach(x => tag(x, x + 1, 969, 972));
```
